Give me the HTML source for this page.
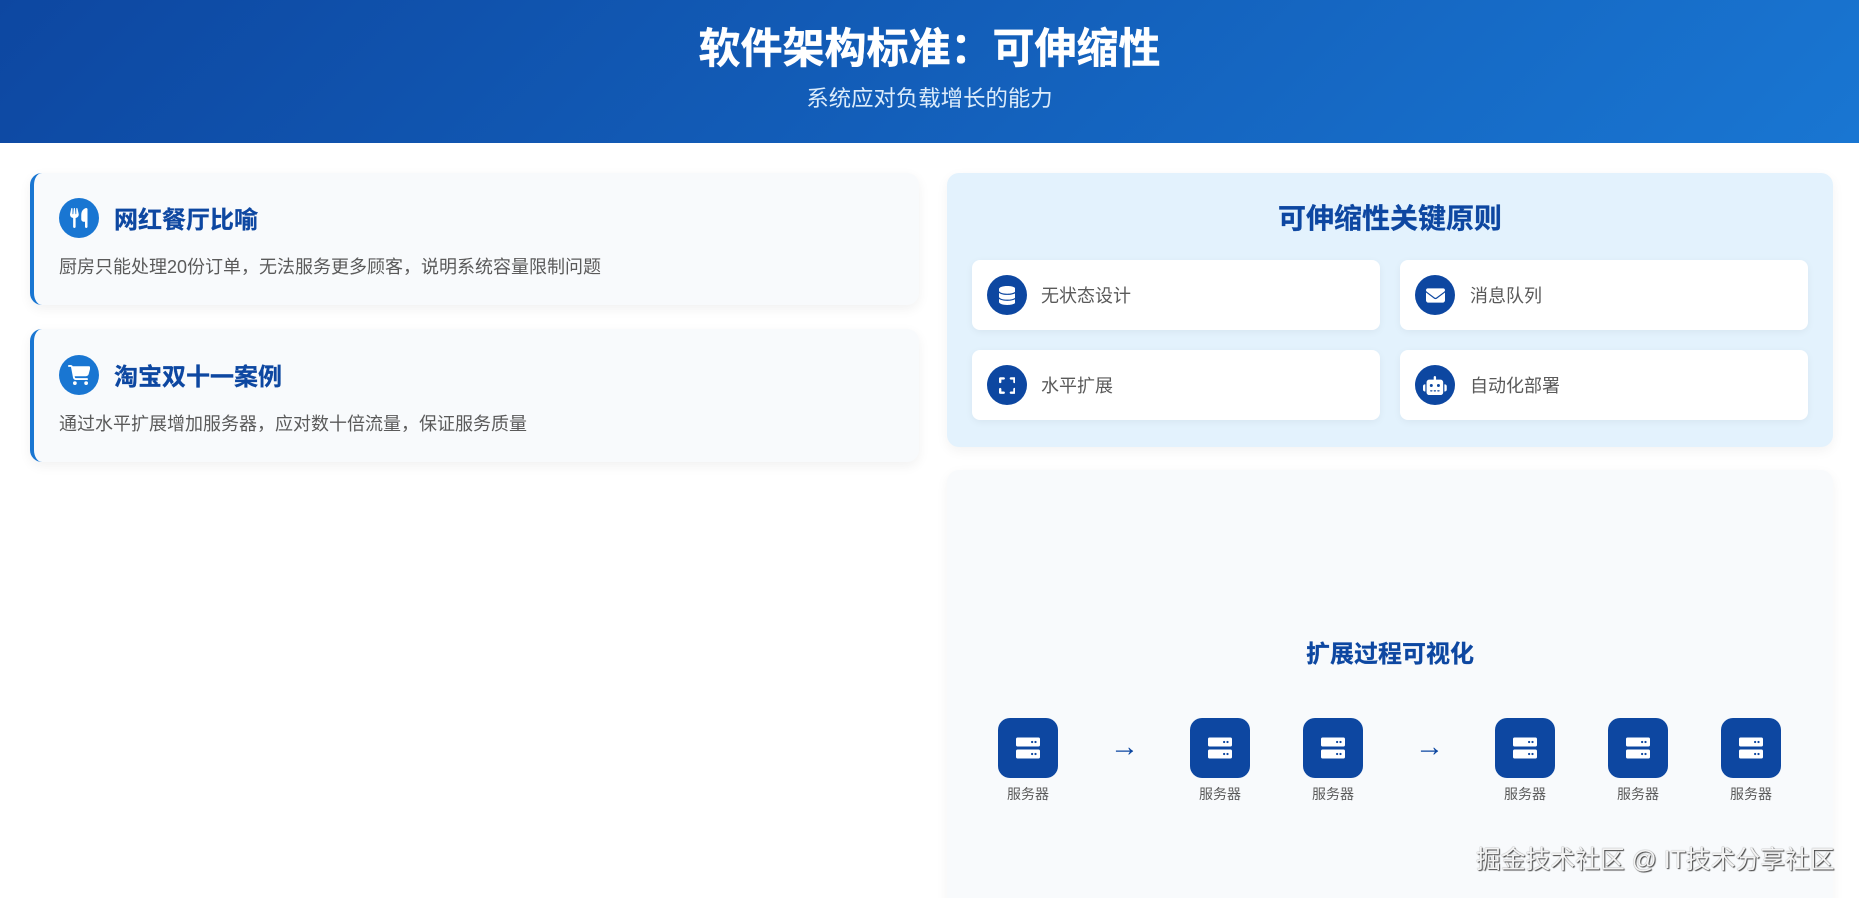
<!DOCTYPE html>
<html lang="zh-CN">
<head>
<meta charset="utf-8">
<title>软件架构标准：可伸缩性</title>
<style>
*{box-sizing:border-box;margin:0;padding:0}
html,body{width:1859px;height:898px;overflow:hidden;background:#fff}
body{position:relative;font-family:"Liberation Sans","Noto Sans CJK SC",sans-serif;color:#555}
.a{position:absolute;white-space:nowrap}
.hdr{left:0;top:0;width:1859px;height:143px;background:linear-gradient(135deg,#0d47a1,#1976d2)}
.t{left:0;width:1859px;text-align:center}
.card{left:30px;width:889px;background:#f8fafc;border-left:4px solid #1976d2;border-radius:12px;box-shadow:0 4px 12px rgba(0,0,0,.06)}
.circ{width:40px;height:40px;border-radius:50%;display:flex;align-items:center;justify-content:center}
.circ svg,.box svg{fill:#fff;display:block;height:20px}
.c1{background:#1976d2}
.c2{background:#0d47a1}
.c2 svg{height:19px}
.h3{font-size:24px;line-height:34px;height:34px;font-weight:700;color:#0d47a1;-webkit-text-stroke:.25px #0d47a1}
.p{font-size:18px;line-height:26px;height:26px;color:#5a5a5a}
.panel{left:947px;width:886px;border-radius:12px;box-shadow:0 4px 12px rgba(0,0,0,.05)}
.item{width:408px;height:70px;background:#fff;border-radius:8px;box-shadow:0 2px 8px rgba(0,0,0,.05)}
.box{width:60px;height:60px;top:718px;background:#0d47a1;border-radius:12px;display:flex;align-items:center;justify-content:center}
.box svg{height:24px}
.lbl{width:60px;top:784px;text-align:center;font-size:14px;line-height:20px;color:#5a5a5a}
.arr{font-size:29px;line-height:34px;color:#0d47a1;top:730px}
.wm{left:1476px;top:843px;font-size:24.8px;line-height:36px;color:#f4f4f4;text-shadow:1px 1px 1px #444,0 0 1px #777}
</style>
</head>
<body>
<div class="a hdr"></div>
<div class="a t" style="top:20px;font-size:42px;line-height:58px;font-weight:700;color:#fff;-webkit-text-stroke:.4px #fff">软件架构标准：可伸缩性</div>
<div class="a t" style="top:83px;font-size:22.4px;line-height:32px;color:#dcecfb">系统应对负载增长的能力</div>

<div class="a card" style="top:173px;height:132px"></div>
<div class="a circ c1" style="left:59px;top:198px"><svg viewBox="0 0 448 512"><path d="M416 0C400 0 288 32 288 176V288c0 35.3 28.7 64 64 64h32V480c0 17.7 14.3 32 32 32s32-14.3 32-32V352 240 32c0-17.7-14.3-32-32-32zM64 16C64 7.8 57.9 1 49.7 .1S34.2 4.6 32.4 12.5L2.1 148.8C.7 155.1 0 161.5 0 167.9c0 45.9 35.1 83.6 80 87.7V480c0 17.7 14.3 32 32 32s32-14.3 32-32V255.6c44.9-4.1 80-41.8 80-87.7c0-6.4-.7-12.8-2.1-19.1L191.6 12.5c-1.8-8-9.3-13.3-17.4-12.4S160 7.8 160 16V150.2c0 5.4-4.4 9.8-9.8 9.8c-5.1 0-9.3-3.9-9.8-9L127.9 14.6C127.2 6.3 120.3 0 112 0s-15.2 6.3-15.9 14.6L83.7 151c-.5 5.1-4.7 9-9.8 9c-5.4 0-9.8-4.4-9.8-9.8V16z"/></svg></div>
<div class="a h3" style="left:114px;top:204px">网红餐厅比喻</div>
<div class="a p" style="left:59px;top:254px">厨房只能处理20份订单，无法服务更多顾客，说明系统容量限制问题</div>

<div class="a card" style="top:329px;height:133px"></div>
<div class="a circ c1" style="left:59px;top:355px"><svg viewBox="0 0 576 512"><path d="M0 24C0 10.7 10.7 0 24 0H69.5c22 0 41.5 12.8 50.6 32h411c26.3 0 45.5 25 38.6 50.4l-41 152.3c-8.5 31.4-37 53.3-69.5 53.3H170.7l5.4 28.5c2.2 11.3 12.1 19.5 23.6 19.5H488c13.3 0 24 10.7 24 24s-10.7 24-24 24H199.7c-34.6 0-64.3-24.6-70.7-58.5L77.4 54.5c-.7-3.8-4-6.5-7.9-6.5H24C10.7 48 0 37.3 0 24zM128 464a48 48 0 1 1 96 0 48 48 0 1 1 -96 0zm336-48a48 48 0 1 1 0 96 48 48 0 1 1 0-96z"/></svg></div>
<div class="a h3" style="left:114px;top:361px">淘宝双十一案例</div>
<div class="a p" style="left:59px;top:411px">通过水平扩展增加服务器，应对数十倍流量，保证服务质量</div>

<div class="a panel" style="top:173px;height:274px;background:#e3f2fd"></div>
<div class="a" style="left:947px;width:886px;top:199px;text-align:center;font-size:28px;line-height:40px;font-weight:700;color:#0d47a1;-webkit-text-stroke:.25px #0d47a1">可伸缩性关键原则</div>

<div class="a item" style="left:972px;top:260px"></div>
<div class="a circ c2" style="left:987px;top:275px"><svg viewBox="0 0 448 512"><path d="M448 80v48c0 44.2-100.3 80-224 80S0 172.2 0 128V80C0 35.8 100.3 0 224 0S448 35.8 448 80zM393.2 214.7c20.8-7.4 39.9-16.9 54.8-28.6V288c0 44.2-100.3 80-224 80S0 332.2 0 288V186.1c14.9 11.8 34 21.2 54.8 28.6C99.7 230.7 159.5 240 224 240s124.3-9.3 169.2-25.3zM0 346.1c14.9 11.8 34 21.2 54.8 28.6C99.7 390.7 159.5 400 224 400s124.3-9.3 169.2-25.3c20.8-7.4 39.9-16.9 54.8-28.6V432c0 44.2-100.3 80-224 80S0 476.2 0 432V346.1z"/></svg></div>
<div class="a p" style="left:1041px;top:283px">无状态设计</div>

<div class="a item" style="left:1400px;top:260px"></div>
<div class="a circ c2" style="left:1415px;top:275px"><svg viewBox="0 0 512 512"><path d="M48 64C21.5 64 0 85.5 0 112c0 15.1 7.1 29.3 19.2 38.4L236.8 313.6c11.4 8.5 27 8.5 38.4 0L492.8 150.4c12.1-9.1 19.2-23.3 19.2-38.4c0-26.5-21.5-48-48-48H48zM0 176V384c0 35.3 28.7 64 64 64H448c35.3 0 64-28.7 64-64V176L294.4 339.2c-22.8 17.1-54 17.1-76.8 0L0 176z"/></svg></div>
<div class="a p" style="left:1470px;top:283px">消息队列</div>

<div class="a item" style="left:972px;top:350px"></div>
<div class="a circ c2" style="left:987px;top:365px"><svg viewBox="0 0 448 512"><path d="M32 32C14.3 32 0 46.3 0 64v96c0 17.7 14.3 32 32 32s32-14.3 32-32V96h64c17.7 0 32-14.3 32-32s-14.3-32-32-32H32zM64 352c0-17.7-14.3-32-32-32s-32 14.3-32 32v96c0 17.7 14.3 32 32 32h96c17.7 0 32-14.3 32-32s-14.3-32-32-32H64V352zM320 32c-17.7 0-32 14.3-32 32s14.3 32 32 32h64v64c0 17.7 14.3 32 32 32s32-14.3 32-32V64c0-17.7-14.3-32-32-32H320zM448 352c0-17.7-14.3-32-32-32s-32 14.3-32 32v64H320c-17.7 0-32 14.3-32 32s14.3 32 32 32h96c17.7 0 32-14.3 32-32V352z"/></svg></div>
<div class="a p" style="left:1041px;top:373px">水平扩展</div>

<div class="a item" style="left:1400px;top:350px"></div>
<div class="a circ c2" style="left:1415px;top:365px"><svg viewBox="0 0 640 512"><path d="M320 0c17.7 0 32 14.3 32 32V96H472c39.8 0 72 32.2 72 72V440c0 39.8-32.2 72-72 72H168c-39.8 0-72-32.2-72-72V168c0-39.8 32.2-72 72-72H288V32c0-17.7 14.3-32 32-32zM208 384c-8.8 0-16 7.2-16 16s7.2 16 16 16h32c8.8 0 16-7.2 16-16s-7.2-16-16-16H208zm96 0c-8.8 0-16 7.2-16 16s7.2 16 16 16h32c8.8 0 16-7.2 16-16s-7.2-16-16-16H304zm96 0c-8.8 0-16 7.2-16 16s7.2 16 16 16h32c8.8 0 16-7.2 16-16s-7.2-16-16-16H400zM264 256a40 40 0 1 0 -80 0 40 40 0 1 0 80 0zm152 40a40 40 0 1 0 0-80 40 40 0 1 0 0 80zM48 224H64V416H48c-26.5 0-48-21.5-48-48V272c0-26.5 21.5-48 48-48zm544 0c26.5 0 48 21.5 48 48v96c0 26.5-21.5 48-48 48H576V224h16z"/></svg></div>
<div class="a p" style="left:1470px;top:373px">自动化部署</div>

<div class="a panel" style="top:470px;height:460px;background:#f8fafc"></div>
<div class="a" style="left:947px;width:886px;top:638px;text-align:center;font-size:24px;line-height:34px;font-weight:700;color:#0d47a1;-webkit-text-stroke:.25px #0d47a1">扩展过程可视化</div>

<svg width="0" height="0" style="position:absolute"><defs><symbol id="srv" viewBox="0 0 512 512"><path d="M32 32C14 32 0 46 0 64v128c0 18 14 32 32 32H480c18 0 32-14 32-32V64c0-18-14-32-32-32H32zm312 72a24 24 0 1 1 0 48 24 24 0 1 1 0-48zm48 24a24 24 0 1 1 48 0 24 24 0 1 1 -48 0zM32 288C14 288 0 302 0 320v128c0 18 14 32 32 32H480c18 0 32-14 32-32V320c0-18-14-32-32-32H32zm312 72a24 24 0 1 1 0 48 24 24 0 1 1 0-48zm48 24a24 24 0 1 1 48 0 24 24 0 1 1 -48 0z"/></symbol></defs></svg>

<div class="a box" style="left:998px"><svg width="24" viewBox="0 0 512 512"><use href="#srv"/></svg></div>
<div class="a lbl" style="left:998px">服务器</div>
<div class="a arr" style="left:1110px">→</div>
<div class="a box" style="left:1190px"><svg width="24" viewBox="0 0 512 512"><use href="#srv"/></svg></div>
<div class="a lbl" style="left:1190px">服务器</div>
<div class="a box" style="left:1303px"><svg width="24" viewBox="0 0 512 512"><use href="#srv"/></svg></div>
<div class="a lbl" style="left:1303px">服务器</div>
<div class="a arr" style="left:1415px">→</div>
<div class="a box" style="left:1495px"><svg width="24" viewBox="0 0 512 512"><use href="#srv"/></svg></div>
<div class="a lbl" style="left:1495px">服务器</div>
<div class="a box" style="left:1608px"><svg width="24" viewBox="0 0 512 512"><use href="#srv"/></svg></div>
<div class="a lbl" style="left:1608px">服务器</div>
<div class="a box" style="left:1721px"><svg width="24" viewBox="0 0 512 512"><use href="#srv"/></svg></div>
<div class="a lbl" style="left:1721px">服务器</div>

<div class="a wm">掘金技术社区 @ IT技术分享社区</div>
</body>
</html>
